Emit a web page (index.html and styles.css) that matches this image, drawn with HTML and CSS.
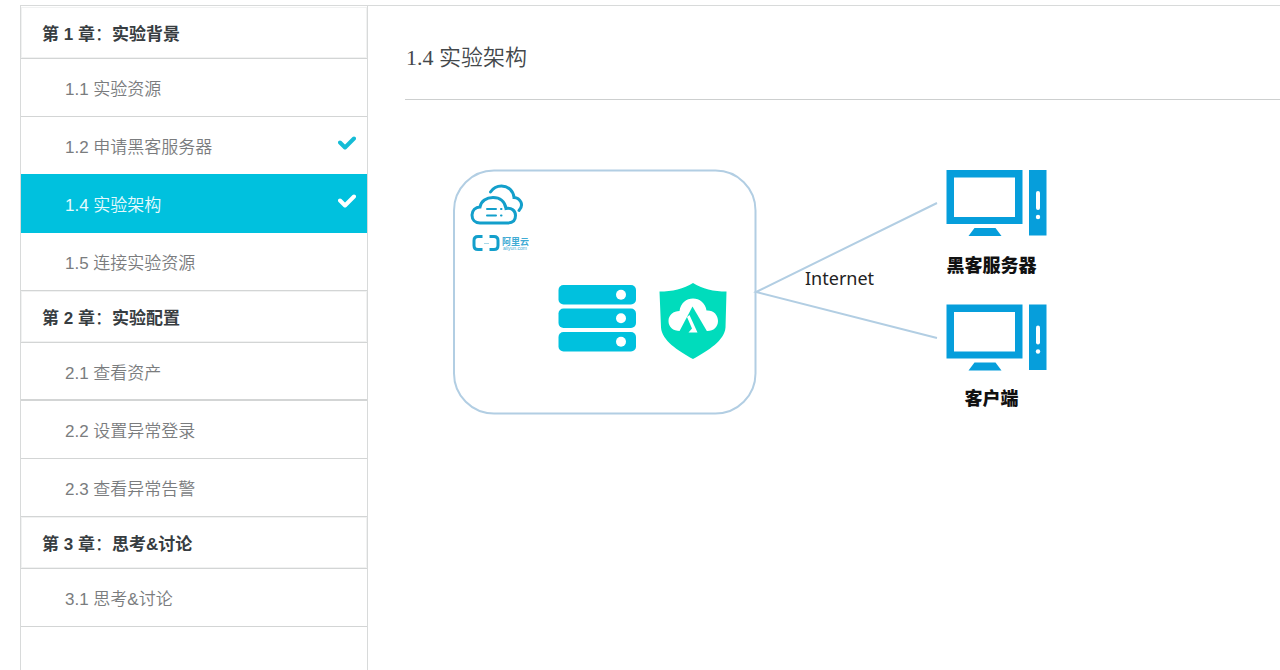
FILE: index.html
```html
<!DOCTYPE html>
<html lang="zh-CN">
<head>
<meta charset="utf-8">
<title>1.4 实验架构</title>
<link rel="stylesheet" href="styles.css">
</head>
<body>
<div class="layout">
  <nav class="sidebar" aria-label="章节目录">
    <h2 class="chapter">第 1 章<span class="colon">：</span>实验背景</h2>
    <a class="lesson" href="#">1.1 实验资源</a>
    <a class="lesson" href="#">1.2 申请黑客服务器
      <svg class="check" viewBox="0 0 18 14" aria-hidden="true"><path d="M2 6.500 7 11.500 16 2.500"/></svg></a>
    <a class="lesson lesson-active" href="#" aria-current="page">1.4 实验架构
      <svg class="check" viewBox="0 0 18 14" aria-hidden="true"><path d="M2 6.500 7 11.500 16 2.500"/></svg></a>
    <a class="lesson" href="#">1.5 连接实验资源</a>
    <h2 class="chapter">第 2 章<span class="colon">：</span>实验配置</h2>
    <a class="lesson lesson-thick" href="#">2.1 查看资产</a>
    <a class="lesson" href="#">2.2 设置异常登录</a>
    <a class="lesson" href="#">2.3 查看异常告警</a>
    <h2 class="chapter">第 3 章<span class="colon">：</span>思考&amp;讨论</h2>
    <a class="lesson" href="#">3.1 思考&amp;讨论</a>
  </nav>
  <main class="content">
    <h1 class="title">1.4 实验架构</h1>
    <svg class="diagram" viewBox="445 160 615 260" role="img" aria-label="实验架构图">
      <defs>
        <g id="computer">
          <path fill-rule="evenodd" d="M0 0h76v54H0zM7.500 7.500v39.500h61V7.500z"/>
          <path d="M28 58h21l6 8H22z"/>
          <path d="M82.500 0H100v65.500H82.500z"/>
          <path class="slot" d="M91.500 23v15"/>
          <circle class="hole" cx="91.500" cy="47" r="2.200"/>
        </g>
        <g id="server">
          <rect width="77.500" height="19.500" rx="5"/>
          <circle class="hole" cx="62.500" cy="9.750" r="5"/>
        </g>
      </defs>
      <rect class="wire" x="454" y="170.500" width="301.500" height="243" rx="40"/>
      <path class="wire" d="M937 203 756 292l181 46"/>
      <g class="cloud">
        <path d="M480 223c-5 0-8-3.500-8-8s3.500-8 8-8c1-6 6.500-9.500 13-9.500 7 0 12 4 13 11 5.500-1 9.500 2 9.500 7s-3 7.500-8 7.500z"/>
        <path d="M490.500 192c3-4.500 7-6 11-6 7 0 12 5 12.500 11.500 6 .5 10.500 7 5 13"/>
        <path class="thin" d="M487 209h9M487 215.500h9M501 209h.5M501 215.500h.5"/>
      </g>
      <g class="logo">
        <path d="M482.500 236.500h-4.500q-4 0-4 4v5q0 4 4 4h4.500M489.500 236.500h4.500q4 0 4 4v5q0 4-4 4h-4.500"/>
        <path class="logo-dash" d="M484 243.500h5"/>
      </g>
      <text class="logo-name" x="502" y="245">阿里云</text>
      <text class="logo-url" x="503" y="250">aliyun.com</text>
      <g class="servers">
        <use href="#server" x="558.500" y="285"/>
        <use href="#server" x="558.500" y="308.500"/>
        <use href="#server" x="558.500" y="332"/>
      </g>
      <path class="shield" d="M693 283c9 6 21 8.500 33.500 8.500l-1 36c-1 13-17 23-32.500 31.500-15.500-8.500-31-18.500-32-31.500L659.500 291.500c12.500 0 24.500-2.500 33.500-8.500z"/>
      <path class="hole" d="M680 331c-7 0-11.500-4-11.500-10s5-10 11-10c1-8 7-12.500 13.500-12.500s12.500 4.500 13.500 12c7-.5 11.500 4.500 11.500 10.500s-4.500 10-10.500 10z"/>
      <path class="shield" d="M692.500 306.500 708 333h-29.500z"/>
      <path class="hole" d="m687 317 2.500-2 8 17.500h-9l3.500-4z"/>
      <text class="label-net" x="805" y="285">Internet</text>
      <g class="computers">
        <use href="#computer" x="946.500" y="170"/>
        <use href="#computer" x="946.500" y="304.500"/>
      </g>
      <text class="label" x="991.500" y="272">黑客服务器</text>
      <text class="label" x="991.500" y="405">客户端</text>
    </svg>
  </main>
</div>
</body>
</html>
```

FILE: styles.css
```css
* {
  box-sizing: border-box;
}

body {
  margin: 0;
  padding: 5px 0 0 20px;
  background: #fff;
  font-family: "Liberation Sans", "Noto Sans CJK SC", sans-serif;
}

.layout {
  display: flex;
  min-height: calc(100vh - 5px);
  border-top: 1px solid #d8dada;
}

.sidebar {
  flex: none;
  width: 348px;
  padding-top: 1px;
  border: solid #d8dada;
  border-width: 0 1px;
}

.chapter {
  display: flex;
  align-items: center;
  height: 52px;
  margin: 0;
  padding: 0 0 1px 21px;
  border-bottom: 1px solid #d3d5d5;
  box-shadow: inset 0 0 0 1px #f1f2f2;
  color: #373d41;
  font-size: 17px;
  font-weight: 700;
  white-space: pre;
}

.colon {
  font-weight: 400;
}

.lesson {
  display: flex;
  align-items: center;
  justify-content: space-between;
  height: 58px;
  padding: 0 11px 0 44px;
  border-bottom: 1px solid #d3d5d5;
  color: #7a7c7e;
  font-size: 17px;
  font-weight: 350;
  text-decoration: none;
}

.lesson-thick {
  border-bottom-width: 2px;
}

.lesson-active {
  border-color: #00c1de;
  background: #00c1de;
  box-shadow: 0 -1px #00c1de;
  color: #e6fafd;
}

.check {
  width: 18px;
  height: 14px;
  margin-bottom: 6px;
  fill: none;
  stroke: #15bcd6;
  stroke-width: 4;
  stroke-linecap: round;
  stroke-linejoin: round;
}

.lesson-active .check {
  stroke: #fff;
}

.content {
  flex: 1;
  min-width: 0;
  padding: 37px 0 0 37px;
}

.title {
  margin: 0 0 60px;
  padding: 0 0 26px 1px;
  border-bottom: 1px solid #cdcfcf;
  color: #44484b;
  font-family: "Liberation Serif", "Noto Sans CJK SC", serif;
  font-size: 22px;
  font-weight: 350;
  line-height: 30px;
}

.diagram {
  display: block;
  width: 615px;
  max-width: 100%;
  margin-left: 40px;
}

.wire {
  fill: none;
  stroke: #b2cee3;
  stroke-width: 2;
}

.cloud,
.logo {
  fill: none;
  stroke: #139fcb;
  stroke-width: 3;
  stroke-linecap: round;
}

.cloud .thin {
  stroke-width: 2;
}

.logo {
  stroke-linecap: butt;
}

.logo-dash {
  stroke: #a6d8e8;
  stroke-width: 1;
}

.logo-name,
.logo-url {
  fill: #3fabd4;
  font-size: 9px;
  font-weight: 700;
}

.logo-url {
  font-size: 5px;
  font-weight: 400;
}

.servers {
  fill: #00c1de;
}

.shield {
  fill: #00dcbc;
}

.hole {
  fill: #fff;
}

.computers {
  fill: #069edb;
}

.slot {
  stroke: #fff;
  stroke-width: 4;
  stroke-linecap: round;
}

.label-net {
  fill: #222;
  font-family: "Noto Sans", sans-serif;
  font-size: 18px;
}

.label {
  fill: #111;
  font-family: "Noto Sans CJK SC", sans-serif;
  font-size: 18px;
  font-weight: 900;
  text-anchor: middle;
}
```
